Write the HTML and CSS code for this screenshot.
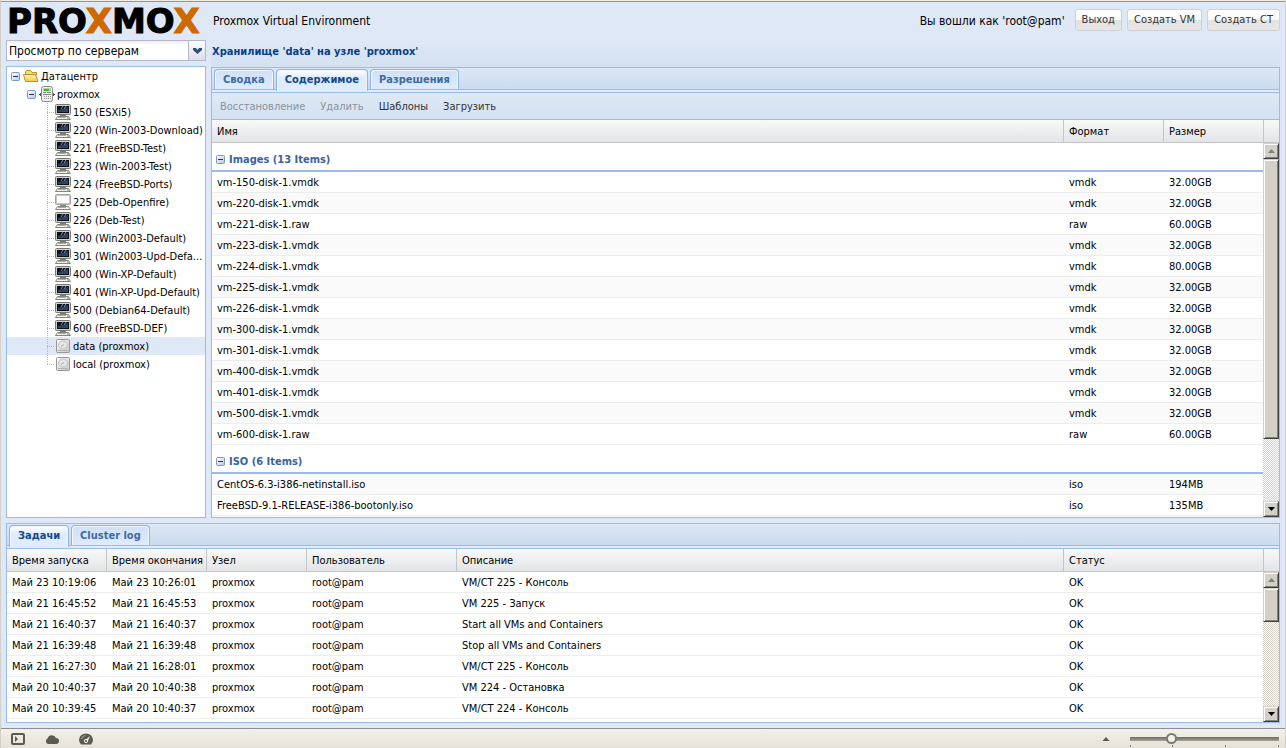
FILE: index.html
```html
<!DOCTYPE html>
<html lang="ru">
<head>
    <meta charset="UTF-8">
    <meta name="viewport" content="width=device-width, initial-scale=1.0">
    <title>Proxmox Virtual Environment</title>
    <link rel="stylesheet" href="styles.css">
</head>
<body>
    <!-- icon set -->
    <svg class="defs" width="0" height="0">
        <defs>
            <linearGradient id="gFolder" x1="0" y1="0" x2="0" y2="1">
                <stop offset="0" stop-color="#fff8b8"/><stop offset="1" stop-color="#f2c84a"/>
            </linearGradient>
            <linearGradient id="gDisk" x1="0" y1="0" x2="1" y2="1">
                <stop offset="0" stop-color="#ffffff"/><stop offset="1" stop-color="#c4c4c4"/>
            </linearGradient>
            <linearGradient id="gToggle" x1="0" y1="0" x2="1" y2="1">
                <stop offset="0" stop-color="#ffffff"/><stop offset="1" stop-color="#b4c8e0"/>
            </linearGradient>
        </defs>
        <symbol id="folder" viewBox="0 0 16 16">
            <path d="M2.500 13V3.500L3.500 2.500H7.500L9 4.500H13.500V7" fill="#f7dc7c" stroke="#b9922c"/>
            <path d="M2.500 13.500L0.500 6.500H12.500L15 13.500Z" fill="url(#gFolder)" stroke="#b9922c"/>
        </symbol>
        <symbol id="server" viewBox="0 0 16 16">
            <path d="M0 8.500h16" stroke="#555"/>
            <path d="M1.500 7v3M14.500 7v3" stroke="#555"/>
            <rect x="2.500" y="0.500" width="11" height="15" rx="2" fill="#eeeeea" stroke="#8a8a86"/>
            <path d="M4 2h8v3H4z" fill="#c4c9c4"/>
            <path d="M5 3h5v2H5z" fill="#10d010"/>
            <path d="M4 6.500h3M8 6.500h4M4 8.500h8" stroke="#858585"/>
            <path d="M5 10.500h7M5 12.500h7" stroke="#999" stroke-dasharray="1 1"/>
        </symbol>
        <symbol id="vm" viewBox="0 0 16 16">
            <rect x="0.500" y="0.500" width="15" height="10" rx="1" fill="#cfcfcb" stroke="#777773"/>
            <rect x="2" y="2" width="12" height="7" fill="#0d1117"/>
            <path d="M3 8V6l5-1 5-2v5z" fill="#2c4464"/>
            <path d="M6 5l2-3M9 5l2-3" stroke="#8292a6"/>
            <path d="M5 11h6v1H5z" fill="#777"/>
            <path d="M2.500 12.500h11l2 3H0.500z" fill="#f1f1ee" stroke="#85857f"/>
            <path d="M3 13.500h8" stroke="#aaa"/>
            <path d="M12 14h2" stroke="#4a9a3c"/>
        </symbol>
        <symbol id="vmon" viewBox="0 0 16 16">
            <rect x="0.500" y="0.500" width="15" height="10" rx="1" fill="#c6c6c2" stroke="#a5a5a1"/>
            <rect x="2" y="2" width="12" height="7" fill="#fff"/>
            <path d="M5 11h6v1H5z" fill="#888"/>
            <path d="M2.500 12.500h11l2 3H0.500z" fill="#f1f1ee" stroke="#85857f"/>
            <path d="M3 13.500h8" stroke="#aaa"/>
        </symbol>
        <symbol id="disk" viewBox="0 0 16 16">
            <rect x="1.500" y="1.500" width="13" height="13" rx="1" fill="url(#gDisk)" stroke="#979797"/>
            <ellipse cx="8" cy="7" rx="4.500" ry="4" fill="#e6e6e6" stroke="#c2c2c2"/>
            <path d="M6 8.500l3-2" stroke="#aaa"/>
            <path d="M3 12.500h10" stroke="#b4b4b4"/>
        </symbol>
        <symbol id="minus" viewBox="0 0 9 9">
            <rect x="0.500" y="0.500" width="8" height="8" rx="1" fill="url(#gToggle)" stroke="#7f99bb"/>
            <path d="M2 4.500h5" stroke="#1b3a66"/>
        </symbol>
        <symbol id="up" viewBox="0 0 7 4"><path d="M3.500 0L7 4H0z"/></symbol>
        <symbol id="down" viewBox="0 0 7 4"><path d="M0 0h7L3.500 4z"/></symbol>
    </svg>

    <header class="header">
        <div class="logo">PRO<span>X</span>MO<span>X</span></div>
        <div class="product">Proxmox Virtual Environment</div>
        <div class="user">Вы вошли как 'root@pam'</div>
        <button class="btn" type="button">Выход</button>
        <button class="btn" type="button">Создать VM</button>
        <button class="btn" type="button">Создать CT</button>
    </header>

    <main class="main">
        <!-- resource tree -->
        <aside class="side">
            <div class="combo">
                <select aria-label="Вид дерева">
                    <option>Просмотр по серверам</option>
                </select>
                <span class="trigger"><svg width="9" height="6" viewBox="0 0 9 6"><path d="M0 0h3l1.500 2L6 0h3v2L4.500 6 0 2z" fill="#2f4d80"/></svg></span>
            </div>
            <ul class="tree">
                <li class="node root"><svg class="toggle"><use href="#minus"/></svg><svg class="icon"><use href="#folder"/></svg><span>Датацентр</span></li>
                <li class="node host"><svg class="toggle"><use href="#minus"/></svg><svg class="icon"><use href="#server"/></svg><span>proxmox</span></li>
                <li class="node leaf"><i></i><svg class="icon"><use href="#vm"/></svg><span>150 (ESXi5)</span></li>
                <li class="node leaf"><i></i><svg class="icon"><use href="#vm"/></svg><span>220 (Win-2003-Download)</span></li>
                <li class="node leaf"><i></i><svg class="icon"><use href="#vm"/></svg><span>221 (FreeBSD-Test)</span></li>
                <li class="node leaf"><i></i><svg class="icon"><use href="#vm"/></svg><span>223 (Win-2003-Test)</span></li>
                <li class="node leaf"><i></i><svg class="icon"><use href="#vm"/></svg><span>224 (FreeBSD-Ports)</span></li>
                <li class="node leaf"><i></i><svg class="icon"><use href="#vmon"/></svg><span>225 (Deb-Openfire)</span></li>
                <li class="node leaf"><i></i><svg class="icon"><use href="#vm"/></svg><span>226 (Deb-Test)</span></li>
                <li class="node leaf"><i></i><svg class="icon"><use href="#vm"/></svg><span>300 (Win2003-Default)</span></li>
                <li class="node leaf"><i></i><svg class="icon"><use href="#vm"/></svg><span>301 (Win2003-Upd-Defa...</span></li>
                <li class="node leaf"><i></i><svg class="icon"><use href="#vm"/></svg><span>400 (Win-XP-Default)</span></li>
                <li class="node leaf"><i></i><svg class="icon"><use href="#vm"/></svg><span>401 (Win-XP-Upd-Default)</span></li>
                <li class="node leaf"><i></i><svg class="icon"><use href="#vm"/></svg><span>500 (Debian64-Default)</span></li>
                <li class="node leaf"><i></i><svg class="icon"><use href="#vm"/></svg><span>600 (FreeBSD-DEF)</span></li>
                <li class="node leaf selected"><i></i><svg class="icon"><use href="#disk"/></svg><span>data (proxmox)</span></li>
                <li class="node leaf last"><i></i><svg class="icon"><use href="#disk"/></svg><span>local (proxmox)</span></li>
            </ul>
        </aside>

        <!-- storage content -->
        <section class="content">
            <h1 class="title">Хранилище 'data' на узле 'proxmox'</h1>
            <div class="panel">
                <div class="tabs">
                    <button class="tab" type="button">Сводка</button>
                    <button class="tab active" type="button">Содержимое</button>
                    <button class="tab" type="button">Разрешения</button>
                </div>
                <div class="toolbar">
                    <button type="button" disabled>Восстановление</button>
                    <button type="button" disabled>Удалить</button>
                    <button type="button">Шаблоны</button>
                    <button type="button">Загрузить</button>
                </div>
                <table class="grid head">
                    <colgroup><col><col class="w100"><col class="w100"><col class="w15"></colgroup>
                    <thead><tr><th>Имя</th><th>Формат</th><th>Размер</th><th></th></tr></thead>
                </table>
                <div class="scroller">
                    <div class="view">
                        <table class="grid striped">
                            <colgroup><col><col class="w100"><col class="w100"></colgroup>
                            <tbody>
                                <tr class="group"><td colspan="3"><svg class="toggle"><use href="#minus"/></svg>Images (13 Items)</td></tr>
                                <tr><td>vm-150-disk-1.vmdk</td><td>vmdk</td><td>32.00GB</td></tr>
                                <tr><td>vm-220-disk-1.vmdk</td><td>vmdk</td><td>32.00GB</td></tr>
                                <tr><td>vm-221-disk-1.raw</td><td>raw</td><td>60.00GB</td></tr>
                                <tr><td>vm-223-disk-1.vmdk</td><td>vmdk</td><td>32.00GB</td></tr>
                                <tr><td>vm-224-disk-1.vmdk</td><td>vmdk</td><td>80.00GB</td></tr>
                                <tr><td>vm-225-disk-1.vmdk</td><td>vmdk</td><td>32.00GB</td></tr>
                                <tr><td>vm-226-disk-1.vmdk</td><td>vmdk</td><td>32.00GB</td></tr>
                                <tr><td>vm-300-disk-1.vmdk</td><td>vmdk</td><td>32.00GB</td></tr>
                                <tr><td>vm-301-disk-1.vmdk</td><td>vmdk</td><td>32.00GB</td></tr>
                                <tr><td>vm-400-disk-1.vmdk</td><td>vmdk</td><td>32.00GB</td></tr>
                                <tr><td>vm-401-disk-1.vmdk</td><td>vmdk</td><td>32.00GB</td></tr>
                                <tr><td>vm-500-disk-1.vmdk</td><td>vmdk</td><td>32.00GB</td></tr>
                                <tr><td>vm-600-disk-1.raw</td><td>raw</td><td>60.00GB</td></tr>
                            </tbody>
                            <tbody class="alt">
                                <tr class="group"><td colspan="3"><svg class="toggle"><use href="#minus"/></svg>ISO (6 Items)</td></tr>
                                <tr><td>CentOS-6.3-i386-netinstall.iso</td><td>iso</td><td>194MB</td></tr>
                                <tr><td>FreeBSD-9.1-RELEASE-i386-bootonly.iso</td><td>iso</td><td>135MB</td></tr>
                            </tbody>
                        </table>
                    </div>
                    <div class="scrollbar">
                        <button class="arrow off" type="button" aria-label="Вверх"><svg><use href="#up"/></svg></button>
                        <div class="track"><div class="thumb" style="height: 82%"></div></div>
                        <button class="arrow" type="button" aria-label="Вниз"><svg><use href="#down"/></svg></button>
                    </div>
                </div>
            </div>
        </section>
    </main>

    <!-- task log -->
    <section class="panel log">
        <div class="tabs">
            <button class="tab active" type="button">Задачи</button>
            <button class="tab" type="button">Cluster log</button>
        </div>
        <table class="grid head">
            <colgroup><col class="w100"><col class="w100"><col class="w100"><col class="w150"><col><col class="w200"><col class="w15"></colgroup>
            <thead><tr><th>Время запуска</th><th>Время окончания</th><th>Узел</th><th>Пользователь</th><th>Описание</th><th>Статус</th><th></th></tr></thead>
        </table>
        <div class="scroller">
            <div class="view">
                <table class="grid">
                    <colgroup><col class="w100"><col class="w100"><col class="w100"><col class="w150"><col><col class="w200"></colgroup>
                    <tbody>
                        <tr><td>Май 23 10:19:06</td><td>Май 23 10:26:01</td><td>proxmox</td><td>root@pam</td><td>VM/CT 225 - Консоль</td><td>OK</td></tr>
                        <tr><td>Май 21 16:45:52</td><td>Май 21 16:45:53</td><td>proxmox</td><td>root@pam</td><td>VM 225 - Запуск</td><td>OK</td></tr>
                        <tr><td>Май 21 16:40:37</td><td>Май 21 16:40:37</td><td>proxmox</td><td>root@pam</td><td>Start all VMs and Containers</td><td>OK</td></tr>
                        <tr><td>Май 21 16:39:48</td><td>Май 21 16:39:48</td><td>proxmox</td><td>root@pam</td><td>Stop all VMs and Containers</td><td>OK</td></tr>
                        <tr><td>Май 21 16:27:30</td><td>Май 21 16:28:01</td><td>proxmox</td><td>root@pam</td><td>VM/CT 225 - Консоль</td><td>OK</td></tr>
                        <tr><td>Май 20 10:40:37</td><td>Май 20 10:40:38</td><td>proxmox</td><td>root@pam</td><td>VM 224 - Остановка</td><td>OK</td></tr>
                        <tr><td>Май 20 10:39:45</td><td>Май 20 10:40:37</td><td>proxmox</td><td>root@pam</td><td>VM/CT 224 - Консоль</td><td>OK</td></tr>
                    </tbody>
                </table>
            </div>
            <div class="scrollbar">
                <button class="arrow off" type="button" aria-label="Вверх"><svg><use href="#up"/></svg></button>
                <div class="track"><div class="thumb" style="height: 29%"></div></div>
                <button class="arrow" type="button" aria-label="Вниз"><svg><use href="#down"/></svg></button>
            </div>
        </div>
    </section>

    <!-- browser status bar -->
    <footer class="status">
        <button type="button" aria-label="Панели"><svg width="14" height="12" viewBox="0 0 14 12"><rect x="1" y="1" width="12" height="10" rx="1" fill="none" stroke="#5c5a55" stroke-width="2"/><path d="M4 3l3 3-3 3z" fill="#5c5a55"/></svg></button>
        <button type="button" aria-label="Облако"><svg width="14" height="12" viewBox="0 0 14 12"><path d="M3 11a3 3 0 0 1-.5-5.500A4.500 4.500 0 0 1 11 5a3 3 0 0 1 0 6z" fill="#5c5a55"/></svg></button>
        <button type="button" aria-label="Турбо"><svg width="14" height="12" viewBox="0 0 14 12"><path d="M2 11.500a7 6.500 0 1 1 10 0z" fill="#5c5a55"/><path d="M2.500 6a5 4 0 0 1 4-3.500" fill="none" stroke="#aaa79f"/><path d="M6 7.500L11 3 8.500 9z" fill="#f4f2ec"/><circle cx="7" cy="8" r="2" fill="#f4f2ec"/><circle cx="7" cy="8" r="1" fill="#5c5a55"/></svg></button>
        <button class="zoom-up" type="button" aria-label="Масштаб"><svg width="8" height="4" viewBox="0 0 7 4"><path d="M3.500 0L7 4H0z" fill="#5c5a55"/></svg></button>
        <div class="zoom">
            <input type="range" min="0" max="100" value="26" aria-label="Масштаб страницы">
            <div class="ticks"><i></i><i></i><i></i><i></i></div>
        </div>
    </footer>
</body>
</html>
```

FILE: styles.css
```css
* {
    box-sizing: border-box;
}
body {
    margin: 0;
    height: 100vh;
    min-height: 480px;
    display: flex;
    flex-direction: column;
    background: #dfe8f6;
    border-left: 1px solid #d4d0c8;
    border-right: 1px solid #d4d0c8;
    font-family: "DejaVu Sans Condensed", "Liberation Sans", sans-serif;
    font-size: 11px;
    line-height: 14px;
    color: #000;
    overflow: hidden;
}
button, select {
    font: inherit;
    margin: 0;
}
.defs {
    position: absolute;
}

/* header */
.header {
    flex: none;
    height: 40px;
    display: flex;
    align-items: center;
    gap: 5px;
    padding: 0 5px 0 6px;
    border-top: 1px solid #f0ede0;
    box-shadow: inset 0 1px 0 #9a968c;
    font-size: 12px;
}
.logo {
    width: 201px;
    font-family: "DejaVu Sans", sans-serif;
    font-weight: bold;
    font-size: 34px;
    line-height: 38px;
    -webkit-text-stroke: 1px currentColor;
}
.logo span {
    color: #d06800;
}
.user {
    margin-left: auto;
    margin-right: 5px;
}
.btn {
    height: 22px;
    padding: 0 6px;
    border: 1px solid #d1d1d1;
    border-radius: 3px;
    background: linear-gradient(#ffffff, #f9f9f9 48%, #e2e2e2 52%, #e7e7e7);
    color: #333;
    font-size: 11px;
}
.header .btn {
    margin-bottom: 2px;
}

/* left side */
.main {
    flex: 1;
    min-height: 0;
    display: flex;
    gap: 5px;
    padding: 0 5px;
}
.side {
    flex: none;
    width: 200px;
    display: flex;
    flex-direction: column;
    gap: 5px;
}
.combo {
    flex: none;
    display: flex;
    height: 21px;
    border: 1px solid #b5b8c8;
    background: #fff;
}
.combo select {
    flex: 1;
    appearance: none;
    border: 0;
    padding: 0 2px;
    background: linear-gradient(#eee, #fff 4px);
    font-size: 12px;
    color: #000;
}
.trigger {
    width: 17px;
    display: flex;
    align-items: center;
    justify-content: center;
    border-left: 1px solid #b5b8c8;
    background: linear-gradient(#fdfdfd, #dcdfe6);
    pointer-events: none;
}
.tree {
    flex: 1;
    min-height: 0;
    margin: 0;
    padding: 0;
    list-style: none;
    background: #fff;
    border: 1px solid #99bce8;
    overflow: hidden;
}
.node {
    display: flex;
    align-items: center;
    height: 18px;
    gap: 2px;
    white-space: nowrap;
}
.node span {
    padding-top: 1px;
}
.node.root {
    padding-left: 4px;
}
.node.host {
    padding-left: 20px;
}
.node.leaf {
    padding-left: 40px;
}
.node.selected {
    background: #dfe8f6;
}
.node i {
    flex: none;
    width: 8px;
    height: 18px;
    margin-right: -2px;
    background:
        repeating-linear-gradient(#b8b8b8 0 1px, transparent 1px 2px) 0 0 / 1px 100% no-repeat,
        repeating-linear-gradient(90deg, #b8b8b8 0 1px, transparent 1px 2px) 0 9px / 7px 1px no-repeat;
}
.node.last i {
    background-size: 1px 9px, 7px 1px;
}
.toggle {
    flex: none;
    width: 9px;
    height: 9px;
}
.icon {
    flex: none;
    width: 16px;
    height: 16px;
}
.node.root .icon,
.node.host .icon {
    margin-left: 1px;
}

/* panels */
.content {
    flex: 1;
    min-width: 0;
    display: flex;
    flex-direction: column;
}
.title {
    flex: none;
    margin: 0;
    height: 27px;
    padding: 5px 1px;
    background: linear-gradient(#dfe8f6, #d3e1f1);
    color: #04408c;
    font-size: 11px;
    line-height: 14px;
}
.panel {
    flex: 1;
    min-height: 0;
    display: flex;
    flex-direction: column;
    border: 1px solid #99bce8;
    background: #fff;
}
.log {
    flex: none;
    height: 200px;
    margin: 5px;
}
.tabs {
    flex: none;
    display: flex;
    gap: 2px;
    height: 25px;
    padding: 1px 2px 0;
    background: linear-gradient(#dde8f5, #cbdbef 21px, #99bce8 21px, #99bce8 22px, #deecfd 22px, #deecfd 24px, #99bce8 24px);
}
.tab {
    height: 21px;
    padding: 0 8px;
    border: 1px solid #8db2e3;
    border-bottom-color: #99bce8;
    border-radius: 4px 4px 0 0;
    background: linear-gradient(#cfe0f6, #deecfd);
    box-shadow: inset 1px 1px 0 #f2f8ff, inset -1px 0 0 #f2f8ff;
    color: #416aa3;
    font-weight: bold;
}
.tab.active {
    height: 22px;
    padding-bottom: 2px;
    border-bottom: 0;
    background: linear-gradient(#fff, #deecfd 8px);
    color: #15498b;
}
.toolbar {
    flex: none;
    display: flex;
    align-items: center;
    gap: 15px;
    height: 27px;
    padding: 1px 8px 0;
    background: linear-gradient(#dfe9f5, #d3e1f1);
    border-bottom: 1px solid #99bce8;
}
.toolbar button {
    padding: 0;
    border: 0;
    background: none;
    color: #333;
}
.toolbar button:disabled {
    color: #8c939c;
}

/* grids */
.grid {
    width: 100%;
    flex: none;
    table-layout: fixed;
    border-collapse: separate;
    border-spacing: 0;
}
.w15 {
    width: 15px;
}
.w100 {
    width: 100px;
}
.w150 {
    width: 150px;
}
.w200 {
    width: 200px;
}
.grid th {
    height: 23px;
    padding: 1px 5px 0;
    text-align: left;
    font-weight: normal;
    white-space: nowrap;
    background: linear-gradient(#f9f9f9, #e3e4e6);
    border-right: 1px solid #c5c5c5;
    border-bottom: 1px solid #c5c5c5;
}
.grid th:last-child {
    border-right: 0;
    padding: 0;
}
.grid td {
    height: 21px;
    padding: 2px 5px 0;
    white-space: nowrap;
    overflow: hidden;
    border-bottom: 1px solid #ededed;
}
.grid td:last-child,
.striped td:nth-child(2) {
    padding-left: 6px;
}
.striped tbody:not(.alt) tr:nth-child(odd) td,
.striped .alt tr:nth-child(even) td {
    background: #fafafa;
}
.grid .group td,
.striped tbody:not(.alt) tr.group td {
    height: 29px;
    padding: 7px 4px 0;
    background: #fff;
    border-bottom: 2px solid #99bbe8;
    color: #3764a0;
    font-weight: bold;
}
.group .toggle {
    margin-right: 4px;
    vertical-align: -1px;
}
.scroller {
    flex: 1;
    min-height: 0;
    display: flex;
}
.view {
    flex: 1;
    min-width: 0;
    overflow: hidden;
}

/* scrollbars */
.scrollbar {
    flex: none;
    width: 16px;
    display: flex;
    flex-direction: column;
}
.track {
    flex: 1;
    background: repeating-conic-gradient(#d4d0c8 0 25%, #fff 0 50%) 0 0 / 2px 2px;
}
.arrow, .thumb {
    background: #d4d0c8;
    border: 1px solid;
    border-color: #d4d0c8 #404040 #404040 #d4d0c8;
    box-shadow: inset 1px 1px 0 #fff, inset -1px -1px 0 #808080;
}
.arrow {
    height: 16px;
    padding: 0;
    display: flex;
    align-items: center;
    justify-content: center;
}
.arrow svg {
    width: 7px;
    height: 4px;
}
.arrow.off {
    fill: #808080;
}

/* status bar */
.status {
    flex: none;
    height: 20px;
    display: flex;
    align-items: center;
    gap: 20px;
    padding: 0 6px 0 10px;
    background: linear-gradient(#f3f0e9, #e6e2d8);
    border-top: 1px solid #8f8f91;
}
.status button {
    display: flex;
    padding: 0;
    border: 0;
    background: none;
}
.status .zoom-up {
    margin-left: auto;
}
.zoom {
    width: 149px;
    padding-top: 2px;
}
.zoom input {
    appearance: none;
    display: block;
    width: 100%;
    height: 12px;
    margin: 0;
    border-radius: 2px;
    background: linear-gradient(#6f6d68, #a5a29b) 0 4px / 100% 4px no-repeat;
}
.zoom input::-webkit-slider-thumb {
    appearance: none;
    width: 11px;
    height: 11px;
    border: 2px solid #7c7a75;
    border-radius: 50%;
    background: #f4f2ec;
}
.ticks {
    display: grid;
    grid-template-columns: 28% 36% 1fr 1px;
}
.ticks i {
    width: 1px;
    height: 2px;
    background: #7c7a75;
}
```
